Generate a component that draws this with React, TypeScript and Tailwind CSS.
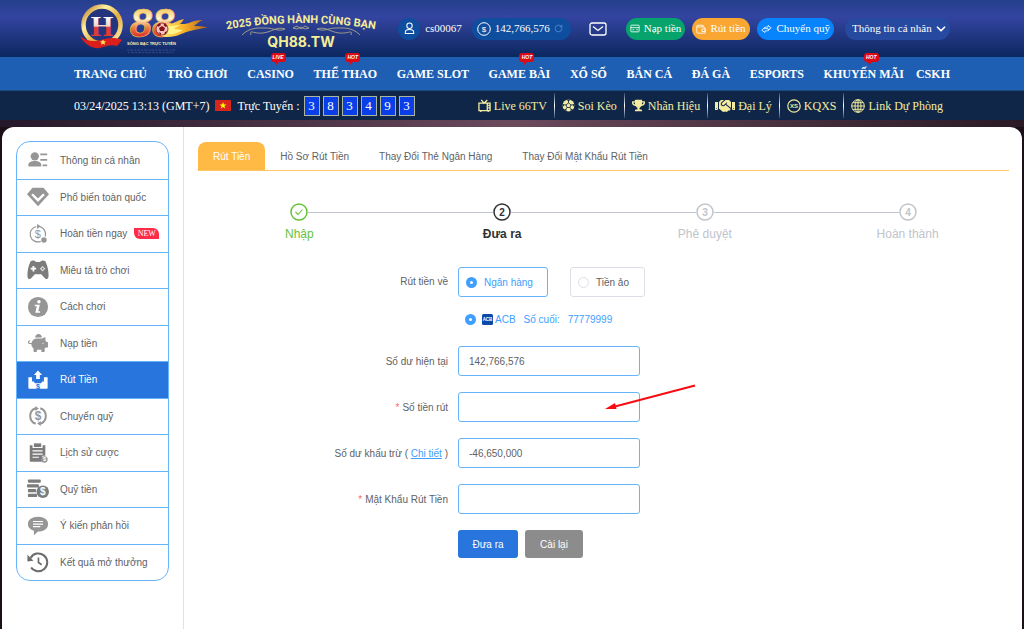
import { useState } from "react";
import type { ReactNode } from "react";
import { FaHandshake, FaPiggyBank, FaTrophy } from "react-icons/fa";
import { ChevronDown, RotateCw } from "lucide-react";

const SERIF = "font-['Liberation_Serif','Noto_Sans',serif]";
const SANS = "font-['Liberation_Sans','Noto_Sans',sans-serif]";

const NAV = [
  { label: "TRANG CHỦ" },
  { label: "TRÒ CHƠI" },
  { label: "CASINO", badge: "LIVE" },
  { label: "THỂ THAO", badge: "HOT" },
  { label: "GAME SLOT" },
  { label: "GAME BÀI", badge: "HOT" },
  { label: "XỔ SỐ" },
  { label: "BẮN CÁ" },
  { label: "ĐÁ GÀ" },
  { label: "ESPORTS" },
];

const NAV_END = [{ label: "KHUYẾN MÃI", badge: "HOT" }, { label: "CSKH" }];

const TABS = ["Rút Tiền", "Hồ Sơ Rút Tiền", "Thay Đổi Thẻ Ngân Hàng", "Thay Đổi Mật Khẩu Rút Tiền"];

function Dollar({ x = 12, y = 16, size = 11, fill = "currentColor" }) {
  return (
    <text x={x} y={y} fontSize={size} fontWeight="bold" fontFamily="Liberation Sans" textAnchor="middle" fill={fill}>
      $
    </text>
  );
}

function MenuSvg({ children }: { children: ReactNode }) {
  return (
    <svg viewBox="0 0 24 24" className="h-[22px] w-[22px]" fill="currentColor">
      {children}
    </svg>
  );
}

const MENU: { label: string; icon: ReactNode; isNew?: boolean }[] = [
  {
    label: "Thông tin cá nhân",
    icon: (
      <MenuSvg>
        <circle cx="8.5" cy="8" r="4.5" />
        <path d="M1.500 19v-2c0-2.500 3-4 7-4s7 1.500 7 4v2z" />
        <path d="M14.500 5h7.500v1.800h-7.500zM14.500 11h7.500v1.800h-7.500zM17 17h5v1.800h-5z" />
      </MenuSvg>
    ),
  },
  {
    label: "Phổ biến toàn quốc",
    icon: (
      <MenuSvg>
        <path d="M6 2h12l6 7-12 13L0 9z" />
        <path d="M5.500 9l6.500 6.500L18.500 9" stroke="#fff" strokeWidth="2.600" fill="none" />
      </MenuSvg>
    ),
  },
  {
    label: "Hoàn tiền ngay",
    isNew: true,
    icon: (
      <MenuSvg>
        <path d="M10 3.800a8.500 8.500 0 1 0 5 16.200M14 4a8.500 8.500 0 0 1 6 10.500" stroke="currentColor" strokeWidth="1.300" fill="none" />
        <path d="M11 1l4 2.500-4 3z" />
        <text x="11.800" y="16" fontSize="12" fontFamily="Liberation Sans" textAnchor="middle">
          $
        </text>
        <circle cx="18.500" cy="18.500" r="3" />
      </MenuSvg>
    ),
  },
  {
    label: "Miêu tả trò chơi",
    icon: (
      <MenuSvg>
        <path
          d="M4 2.500c2-1.500 4.500-1 6 .8h4c1.500-1.800 4-2.300 6-.8 2.500 4.500 3.800 11 3.500 16.500-.5 3.500-3 3.500-4.500 1.500l-3.500-4h-7L5 20.500C3.500 22.500 1 22.500.5 19 .2 13.500 1.500 7 4 2.500z"
          fill="#7c7c7c"
        />
        <path d="M6 7.500h2v2h2v2H8v2H6v-2H4v-2h2z" fill="#fff" />
        <path d="M17 7.500l3 3-3 3-3-3z" fill="#ddd" />
        <circle cx="17" cy="10.500" r="1" fill="#7c7c7c" />
      </MenuSvg>
    ),
  },
  {
    label: "Cách chơi",
    icon: (
      <MenuSvg>
        <circle cx="12" cy="12" r="11" />
        <circle cx="13" cy="6.300" r="1.900" fill="#fff" />
        <path d="M8.500 9.500h5.500l-1.700 7h2v1.700H9l1.700-7H8.500z" fill="#fff" />
      </MenuSvg>
    ),
  },
  {
    label: "Nạp tiền",
    icon: <FaPiggyBank className="h-[20px] w-[20px]" />,
  },
  {
    label: "Rút Tiền",
    icon: (
      <MenuSvg>
        <path d="M12 1.500l4.500 5H14v4.500h-4V6.500H7.500z" />
        <path d="M1.500 9h4v4.500h2l1 2h7l1-2h2V9h4v11.500a1 1 0 0 1-1 1h-19a1 1 0 0 1-1-1z" />
        <Dollar y={21.500} size={8} fill="#2775dd" />
      </MenuSvg>
    ),
  },
  {
    label: "Chuyển quỹ",
    icon: (
      <MenuSvg>
        <path d="M9.500 3.500a9 9 0 0 0 0 17M14.500 3.500a9 9 0 0 1 0 17" stroke="currentColor" strokeWidth="2.200" fill="none" />
        <path d="M9 1l4 2.800-4 2.700zM15 17.500l-4 2.800 4 2.700z" />
        <Dollar y={16.500} size={13} />
      </MenuSvg>
    ),
  },
  {
    label: "Lịch sử cược",
    icon: (
      <MenuSvg>
        <path d="M3 3.500h3v3h11v-3h3V15h-3.500v6.500H4a1 1 0 0 1-1-1z" fill="#7c7c7c" />
        <path d="M7.500 1.500h8v4h-8z" fill="#7c7c7c" />
        <path d="M6 9h11v1.300H6zM6 12.500h11v1.300H6zM6 16h7v1.300H6z" fill="#fff" />
        <circle cx="19" cy="19" r="3.500" />
        <Dollar x={19} y={21.200} size={6} fill="#fff" />
      </MenuSvg>
    ),
  },
  {
    label: "Quỹ tiền",
    icon: (
      <MenuSvg>
        <rect x="1" y="1.500" width="14" height="3.700" rx="1" fill="#7c7c7c" />
        <rect x="0" y="6.700" width="13" height="3.700" rx="1" fill="#7c7c7c" />
        <rect x="1" y="11.900" width="9" height="3.700" rx="1" fill="#7c7c7c" />
        <rect x="1" y="17.100" width="10" height="3.700" rx="1" fill="#7c7c7c" />
        <circle cx="17.200" cy="15" r="6.800" fill="#7c7c7c" />
        <Dollar x={17.200} y={19} size={11} fill="#fff" />
      </MenuSvg>
    ),
  },
  {
    label: "Ý kiến phản hồi",
    icon: (
      <MenuSvg>
        <path d="M12 2c6.500 0 11 3.300 11 8s-4.500 8-11 8l-4.500 4v-4.800C3.500 16 1 13.500 1 10c0-4.700 4.500-8 11-8z" />
        <path d="M6.500 6.500h11v1.200h-11zM6.500 9.300h11v1.200h-11zM6.500 12.100h8v1.200h-8z" fill="#fff" />
      </MenuSvg>
    ),
  },
  {
    label: "Kết quả mở thưởng",
    icon: (
      <MenuSvg>
        <path d="M4 7.500A9.700 9.700 0 1 1 4.500 18" stroke="#6c6c6c" strokeWidth="2.200" fill="none" />
        <path d="M.5 4v7.500l6.500-1z" fill="#6c6c6c" />
        <path d="M12.500 7v5.500l3.500 2.500" stroke="#6c6c6c" strokeWidth="1.800" fill="none" />
      </MenuSvg>
    ),
  },
];

function Logo() {
  return (
    <svg viewBox="0 0 136 57" className="h-[57px] w-[136px] shrink-0" role="img" aria-label="QH88">
      <defs>
        <linearGradient id="gold" x1="0" y1="0" x2="1" y2="1">
          <stop offset="0" stopColor="#b8741c" />
          <stop offset="0.300" stopColor="#fff0a0" />
          <stop offset="0.600" stopColor="#e6ad3c" />
          <stop offset="1" stopColor="#fff3b5" />
        </linearGradient>
        <linearGradient id="digits" x1="0" y1="0" x2="0" y2="1">
          <stop offset="0.100" stopColor="#f7b83c" />
          <stop offset="0.400" stopColor="#fff6cf" />
          <stop offset="0.600" stopColor="#f0803c" />
          <stop offset="0.850" stopColor="#d3202b" />
        </linearGradient>
        <linearGradient id="letter" x1="0" y1="0" x2="0" y2="1">
          <stop offset="0.200" stopColor="#fff" />
          <stop offset="0.500" stopColor="#f5d5cb" />
          <stop offset="0.550" stopColor="#e03b35" />
          <stop offset="1" stopColor="#e03b35" />
        </linearGradient>
        <linearGradient id="flame" x1="0" y1="0" x2="1" y2="0">
          <stop offset="0" stopColor="#fff07a" />
          <stop offset="0.500" stopColor="#f9b327" />
          <stop offset="1" stopColor="#a85a1c" />
        </linearGradient>
      </defs>
      <ellipse cx="28" cy="25" rx="18.500" ry="18.500" fill="#24357e" stroke="url(#gold)" strokeWidth="4.500" />
      <text x="28" y="36" fontSize="29" fontWeight="bold" fontFamily="Liberation Serif" textAnchor="middle" fill="url(#letter)">
        H
      </text>
      <path d="M6 36c6 5 13 6 21 4 7-2 14-3 21 0l-5 6c-6-2-11 0-17 2-8 1-16-4-20-12z" fill="#dc1f1c" />
      <path d="M29 39.500l1 1.800h2l-1.500 1.400.5 2-2-1-2 1 .5-2-1.500-1.400h2z" fill="#ffe45a" />
      <text x="78" y="37" fontSize="40" fontWeight="bold" fontStyle="italic" fontFamily="Liberation Sans" textAnchor="middle" fill="url(#digits)" stroke="#f6c25e" strokeWidth="0.600">
        88
      </text>
      <path d="M92 24c7 1 9-3 18-5-2 3-3 4-4 5 9 1 14-5 23-4-4 1-6 4-9 6 5 0 9 0 14 2-8 0-12 2-18 3-8 2-13 6-22 6-6 0-9-2-8-5z" fill="url(#flame)" />
      <path d="M93 26c5 1 8-1 13-1-3 2-5 2-6 4l9 1c-4 2-9 5-15 4z" fill="#fff58a" />
      <circle cx="88" cy="29" r="6" fill="#f8c5bd" stroke="#82131c" strokeWidth="0.800" />
      <path d="M88 26l3 2-1 3h-4l-1-3zM83 25l3-2 1 2-3 2zM91 23l2.500 3-2 1-2-2zM84 32l3 1v2zM91 32l2-1-1 3-2 1z" fill="#82131c" />
      <text x="53" y="45" fontSize="4" fontWeight="bold" fontFamily="Liberation Sans" fill="#fff1b0">
        SÒNG BẠC TRỰC TUYẾN
      </text>
      <path d="M53 50h48M54 52.500h46" stroke="#8fa3e0" strokeWidth="1.500" strokeDasharray="2 1 3 1" opacity="0.180" />
    </svg>
  );
}

function Slogan() {
  return (
    <svg viewBox="0 0 156 57" className="h-[57px] w-[156px] shrink-0" fill="#f6ee96">
      <path id="arc" d="M0 30 Q78 16 156 30" fill="none" />
      <text fontSize="11" fontWeight="bold" fontFamily="Roboto" textAnchor="middle">
        <textPath href="#arc" startOffset="50%">
          2025 ĐỒNG HÀNH CÙNG BẠN
        </textPath>
      </text>
      <g fill="none" stroke="#d3c98c" strokeWidth="0.800" opacity="0.850">
        <path d="M19 35c8-8 16-7 24-7s12 4 19 1c-8-3-13 3-22 4s-14-4-12 2" />
        <path d="M137 35c-8-8-16-7-24-7s-12 4-19 1c8-3 13 3 22 4s14-4 12 2" />
        <path d="M70 28l4-2 4 3 4-3 4 2-4 1-4-2-4 2z" />
      </g>
      <text x="78" y="47" fontSize="14" fontWeight="bold" fontFamily="Inter" textAnchor="middle">
        QH88.TW
      </text>
    </svg>
  );
}

function NavLink({ label, badge }: { label: string; badge?: string }) {
  return (
    <a href="#" className="relative whitespace-nowrap">
      {label}
      {badge && (
        <span className="absolute -top-3 left-1/2 h-[9px] w-[15px] rounded-[3px] bg-[#dc0a14] text-center font-['Liberation_Sans',sans-serif] text-[5px] leading-[9px] italic">
          {badge}
          <svg viewBox="0 0 4 3" className="absolute top-full left-1 h-[3px] w-1">
            <path d="M0 0h4L1 3z" fill="#dc0a14" />
          </svg>
        </span>
      )}
    </a>
  );
}

const QUICK_LINKS: { label: string; icon: ReactNode }[] = [
  {
    label: "Live 66TV",
    icon: (
      <svg viewBox="0 0 14 14" className="h-[13px] w-[13px]" fill="none" stroke="currentColor" strokeWidth="1.400">
        <path d="M1 4.500h12v8H1zM3.500 1l3 3.500L10 1M10 4.500v8M11 7h1.500M11 9.500h1.500M3 13v1M11 13v1" />
      </svg>
    ),
  },
  {
    label: "Soi Kèo",
    icon: (
      <svg viewBox="0 0 14 14" className="h-[13px] w-[13px]">
        <circle cx="7" cy="7" r="6.400" fill="currentColor" />
        <path d="M7 4.300l2.600 1.900-1 3H5.400l-1-3z" fill="none" stroke="#102648" strokeWidth="0.900" />
        <path d="M7 .8v3.500M13 6l-3.400.5M10.600 12l-2-2.800M3.400 12l2-2.800M1 6l3.400.5" stroke="#102648" strokeWidth="0.900" />
        <path d="M5 .9h4L7 2.600zM13.300 5v3.800l-1.600-2zM9 13.200l3-2-2.500-.3zM5 13.200l-3-2 2.500-.3zM.7 5v3.800l1.600-2z" fill="#102648" />
      </svg>
    ),
  },
  { label: "Nhãn Hiệu", icon: <FaTrophy className="h-[13px] w-[13px]" /> },
  { label: "Đại Lý", icon: <FaHandshake className="h-4 w-5" /> },
  {
    label: "KQXS",
    icon: (
      <svg viewBox="0 0 14 14" className="h-[14px] w-[14px]">
        <circle cx="7" cy="7" r="6.200" fill="none" stroke="currentColor" strokeWidth="1.200" />
        <text x="7" y="9.200" fontSize="6" fontWeight="bold" fontFamily="Liberation Sans" textAnchor="middle" fill="currentColor">
          XS
        </text>
      </svg>
    ),
  },
  {
    label: "Link Dự Phòng",
    icon: (
      <svg viewBox="0 0 14 14" className="h-[14px] w-[14px]" fill="none" stroke="currentColor" strokeWidth="1">
        <circle cx="7" cy="7" r="6.300" />
        <ellipse cx="7" cy="7" rx="3" ry="6.300" />
        <path d="M7 .7v12.600M.7 7h12.600M1.700 3.700h10.600M1.700 10.300h10.600" />
      </svg>
    ),
  },
];

function Header() {
  return (
    <header className={`${SERIF} text-white`}>
      <div className="bg-linear-to-b from-[#24408c] via-[#3344a0] via-30% to-[#0a2860]">
        <div className="mx-auto flex h-[57px] max-w-[876px] items-center text-[11px]">
          <Logo />
          <div className="ml-[13px]">
            <Slogan />
          </div>
          <div className="ml-auto flex items-center whitespace-nowrap">
            <span className="flex h-[22px] w-[22px] items-center justify-center rounded-full bg-[#0f4e9e]">
              <svg viewBox="0 0 14 14" className="h-[13px] w-[13px]" fill="none" stroke="currentColor" strokeWidth="1.100">
                <circle cx="7" cy="4" r="2.900" />
                <path d="M2.500 12.500v-1.500c0-2 1.500-3 4.500-3s4.500 1 4.500 3v1.500z" />
              </svg>
            </span>
            <span className="ml-[5px]">cs00067</span>
            <span className="ml-[10px] flex h-[22px] items-center rounded-full bg-[#0f4e9e] pr-[8px] pl-[5px]">
              <svg viewBox="0 0 14 14" className="h-[14px] w-[14px]">
                <circle cx="7" cy="7" r="6.300" fill="none" stroke="currentColor" />
                <text x="7" y="10" fontSize="8" fontFamily="Liberation Sans" textAnchor="middle" fill="currentColor">
                  $
                </text>
              </svg>
              <span className="mx-[4px]">142,766,576</span>
              <button aria-label="Làm mới">
                <RotateCw className="h-[9px] w-[9px] text-[#5c8fe0]" />
              </button>
            </span>
            <button className="ml-[18px]" aria-label="Tin nhắn">
              <svg viewBox="0 0 18 14" className="h-[14px] w-[18px]" fill="none" stroke="currentColor" strokeWidth="1.300">
                <rect x="1" y="1" width="16" height="12" rx="2" />
                <path d="M4 4.500l5 4 5-4" />
              </svg>
            </button>
            <button className="ml-[19px] flex h-[22px] items-center gap-[4px] rounded-full bg-[#06a46c] px-[4px]">
              <svg viewBox="0 0 12 10" className="h-[9px] w-[10px]" fill="none" stroke="currentColor">
                <rect x="1" y="1" width="10" height="8" rx="1" />
                <path d="M1 4h10M3 6.500h2M7.500 6.500h2" />
              </svg>
              Nạp tiền
            </button>
            <button className="ml-[7px] flex h-[22px] items-center gap-[4px] rounded-full bg-[#f9a633] px-[4px]">
              <svg viewBox="0 0 12 12" className="h-[10px] w-[10px]" fill="none" stroke="currentColor">
                <path d="M1 2.500a1 1 0 0 1 1-1h6.500v2h1l1.500 1.500v6H2a1 1 0 0 1-1-1zM1 3.500h8M7 6h4v3H7z" />
              </svg>
              Rút tiền
            </button>
            <button className="ml-[7px] flex h-[22px] items-center gap-[5px] rounded-full bg-[#0784fb] px-[4px]">
              <svg viewBox="0 0 14 12" className="h-[10px] w-[11px]" fill="none" stroke="currentColor" strokeLinejoin="round">
                <path d="M3 5.500C4 4 5 3.500 9 3.500V1.500l4 3-4 2.500V5.500z" />
                <path d="M11 6.500c-1 1.500-2 2-6 2v2l-4-3 2-1.500" />
              </svg>
              Chuyển quỹ
            </button>
            <label className="relative ml-[11px] flex items-center">
              <select aria-label="Thông tin cá nhân" className="h-[22px] w-[105px] appearance-none rounded-full bg-[#264a9f] pl-[7px]">
                <option>Thông tin cá nhân</option>
              </select>
              <ChevronDown className="pointer-events-none absolute right-[2px] h-[14px] w-[14px]" strokeWidth={3} />
            </label>
          </div>
        </div>
      </div>

      <nav className="bg-[#1f5fb3]">
        <div className="mx-auto flex h-[33px] max-w-[876px] items-center justify-between text-[12px] font-bold">
          {NAV.map((item) => (
            <NavLink key={item.label} {...item} />
          ))}
          <div className="flex gap-3">
            {NAV_END.map((item) => (
              <NavLink key={item.label} {...item} />
            ))}
          </div>
        </div>
      </nav>

      <div className="border-t border-[#1c4a7c] bg-[#102648]">
        <div className="mx-auto flex h-[29px] max-w-[876px] items-center text-[12px] whitespace-nowrap">
          <time>03/24/2025 13:13 (GMT+7)</time>
          <svg viewBox="0 0 16 11" className="mx-[6px] h-[11px] w-[16px]">
            <rect width="16" height="11" fill="#d8251d" />
            <path d="M8 2l.9 2.500h2.600L9.400 6l.8 2.600L8 7l-2.200 1.600.8-2.600-2.100-1.500h2.600z" fill="#ff0" />
          </svg>
          <span>Trực Tuyến :</span>
          <div className="ml-[4px] flex gap-[3px]">
            {["3", "8", "3", "4", "9", "3"].map((digit, i) => (
              <span key={i} className="flex h-[20px] w-[16px] items-center justify-center border border-[#a9b59f] bg-[#0a3fe8] text-[13px]">
                {digit}
              </span>
            ))}
          </div>
          <div className="ml-auto flex items-center text-[#f3eca0]">
            {QUICK_LINKS.map((link, i) => (
              <div key={link.label} className="flex items-center">
                {i > 0 && <span className="h-[25px] w-px bg-linear-to-b from-[#33496b] via-white to-[#33496b]" />}
                <a href="#" className="flex items-center gap-[3px] px-[7px]">
                  {link.icon}
                  {link.label}
                </a>
              </div>
            ))}
          </div>
        </div>
      </div>
    </header>
  );
}

function Sidebar() {
  return (
    <aside className="w-[182px] shrink-0 border-r border-[#e2e2e2] px-[14px] pt-[14px]">
      <ul className="grid h-[440px] grid-rows-12 overflow-hidden rounded-[14px] border border-[#66b5fb] text-[#606266]">
        {MENU.map((item, i) => {
          const active = item.label === "Rút Tiền";
          return (
            <li key={item.label} className={i > 0 ? "border-t border-[#66b5fb]" : ""}>
              <a
                href="#"
                className={`flex h-full items-center whitespace-nowrap pl-[10px] ${active ? "bg-[#2775dd] text-white" : ""}`}
              >
                <span className={`flex w-[22px] justify-center ${active ? "text-white" : "text-[#969696]"}`}>{item.icon}</span>
                <span className="ml-[11px]">{item.label}</span>
                {item.isNew && (
                  <span className="ml-[7px] h-[11px] w-[25px] rounded-tr-[6px] rounded-bl-[6px] bg-[#ff2b47] text-center font-['Liberation_Serif',serif] text-[8px] leading-[11px] text-white">
                    NEW
                  </span>
                )}
              </a>
            </li>
          );
        })}
      </ul>
    </aside>
  );
}

const STEPS = [
  { label: "Nhập", color: "text-[#67c23a]" },
  { label: "Đưa ra", color: "font-bold text-[#303133]" },
  { label: "Phê duyệt", color: "text-[#c0c4cc]" },
  { label: "Hoàn thành", color: "text-[#c0c4cc]" },
];

function Steps() {
  return (
    <ol className="mt-[32px] flex">
      {STEPS.map((step, i) => (
        <li key={step.label} className={`flex flex-1 flex-col items-center text-[12px] ${step.color}`}>
          <div className="flex w-full items-center">
            <span className={`h-px flex-1 ${i > 0 ? "bg-[#c0c4cc]" : ""}`} />
            <svg viewBox="0 0 18 18" className="h-[18px] w-[18px]" fill="none" stroke="currentColor">
              <circle cx="9" cy="9" r="8" strokeWidth="1.500" />
              {i === 0 ? (
                <path d="M5.500 9l2.500 2.500 4.500-5" strokeWidth="1.100" />
              ) : (
                <text x="9" y="12.500" fontSize="10" fontWeight="bold" fontFamily="Liberation Sans" textAnchor="middle" fill="currentColor" stroke="none">
                  {i + 1}
                </text>
              )}
            </svg>
            <span className={`h-px flex-1 ${i < STEPS.length - 1 ? "bg-[#c0c4cc]" : ""}`} />
          </div>
          <span className="mt-[5px] leading-4">{step.label}</span>
        </li>
      ))}
    </ol>
  );
}

const RADIO = "h-[11px] w-[11px] appearance-none rounded-full border border-[#dcdfe6] bg-white checked:border-4 checked:border-[#409eff]";
const INPUT = "h-[30px] w-full rounded-[3px] border border-[#66b5fb] bg-white px-[10px] text-[#606266] outline-none";

interface FieldProps {
  id: string;
  label: ReactNode;
  required?: boolean;
  children: ReactNode;
}

function Field({ id, label, required, children }: FieldProps) {
  return (
    <div className="flex items-center">
      <label htmlFor={id} className="mr-[10px] w-[250px] shrink-0 text-right">
        {required && <span className="mr-[3px] text-[#f56c6c]">*</span>}
        {label}
      </label>
      <div className="relative w-[182px]">{children}</div>
    </div>
  );
}

function WithdrawForm() {
  const [method, setMethod] = useState("bank");
  const [amount, setAmount] = useState("");
  const [password, setPassword] = useState("");

  const optionClass = (value: string) =>
    `flex h-[30px] items-center gap-[7px] rounded-[3px] border px-[7px] ${
      method === value ? "border-[#66b5fb] text-[#409eff]" : "border-[#dcdfe6]"
    }`;

  return (
    <form className="mt-[25px] flex flex-col gap-4 text-[#606266]" onSubmit={(e) => e.preventDefault()}>
      <div className="flex items-start">
        <span className="mr-[10px] w-[250px] shrink-0 text-right leading-[30px]">Rút tiền về</span>
        <div>
          <div className="flex gap-[22px]">
            <label className={`${optionClass("bank")} w-[90px]`}>
              <input type="radio" name="method" className={RADIO} checked={method === "bank"} onChange={() => setMethod("bank")} />
              Ngân hàng
            </label>
            <label className={`${optionClass("crypto")} w-[75px]`}>
              <input type="radio" name="method" className={RADIO} checked={method === "crypto"} onChange={() => setMethod("crypto")} />
              Tiền ảo
            </label>
          </div>
          <label className="mt-3 flex h-[21px] items-center pl-[7px] text-[#409eff]">
            <input type="radio" name="account" className={RADIO} defaultChecked />
            <svg viewBox="0 0 11 11" className="mr-[2px] ml-[6px] h-[11px] w-[11px]">
              <rect width="11" height="11" rx="1.500" fill="#0b4aa8" />
              <text x="5.500" y="7.300" fontSize="4.500" fontWeight="bold" fontFamily="Liberation Sans" textAnchor="middle" fill="#fff">
                ACB
              </text>
            </svg>
            ACB
            <span className="ml-[8px]">Số cuối:</span>
            <span className="ml-[8px]">77779999</span>
          </label>
        </div>
      </div>

      <Field id="balance" label="Số dư hiện tại">
        <input id="balance" className={INPUT} value="142,766,576" readOnly />
      </Field>

      <Field id="amount" label="Số tiền rút" required>
        <input id="amount" className={INPUT} value={amount} onChange={(e) => setAmount(e.target.value)} />
        {/* Pointer to the amount box */}
        <svg viewBox="0 0 92 28" className="pointer-events-none absolute -top-2 left-[147px] h-7 w-[92px]">
          <path d="M90 1.500L10 22.500" stroke="#f80c12" strokeWidth="2" />
          <path d="M0 25l10-6 1.500 6z" fill="#f80c12" />
        </svg>
      </Field>

      <Field
        id="deduct"
        label={
          <>
            Số dư khấu trừ ({" "}
            <a href="#" className="text-[#409eff] underline">
              Chi tiết
            </a>{" "}
            )
          </>
        }
      >
        <input id="deduct" className={INPUT} value="-46,650,000" readOnly />
      </Field>

      <Field id="password" label="Mật Khẩu Rút Tiền" required>
        <input id="password" type="password" className={INPUT} value={password} onChange={(e) => setPassword(e.target.value)} />
      </Field>

      <div className="flex gap-[7px] pl-[260px] text-white">
        <button type="submit" className="h-[28px] w-[60px] rounded-[3px] bg-[#2775dd]">
          Đưa ra
        </button>
        <button type="reset" className="h-[28px] w-[58px] rounded-[3px] bg-[#8c8c8c]">
          Cài lại
        </button>
      </div>
    </form>
  );
}

export default function App() {
  return (
    <div className="flex min-h-screen flex-col bg-[#1b1019]">
      <Header />
      <div className="h-[7px] bg-linear-to-r from-[#25182a] via-[#6b4a5c] to-[#2a1a26]" />
      <div className={`${SANS} mx-[2px] flex flex-1 rounded-t-[12px] bg-white text-[10px]`}>
        <Sidebar />
        <main className="min-w-0 flex-1 pt-[15px] pr-[13px] pb-8 pl-[14px]">
          <div className="flex border-b border-[#ffc663] text-[#606266]">
            {TABS.map((tab, i) => (
              <button
                key={tab}
                className={`h-[28px] rounded-t-[8px] px-[15px] whitespace-nowrap ${i === 0 ? "bg-[#ffba45] text-white" : ""}`}
              >
                {tab}
              </button>
            ))}
          </div>
          <Steps />
          <WithdrawForm />
        </main>
      </div>
    </div>
  );
}
